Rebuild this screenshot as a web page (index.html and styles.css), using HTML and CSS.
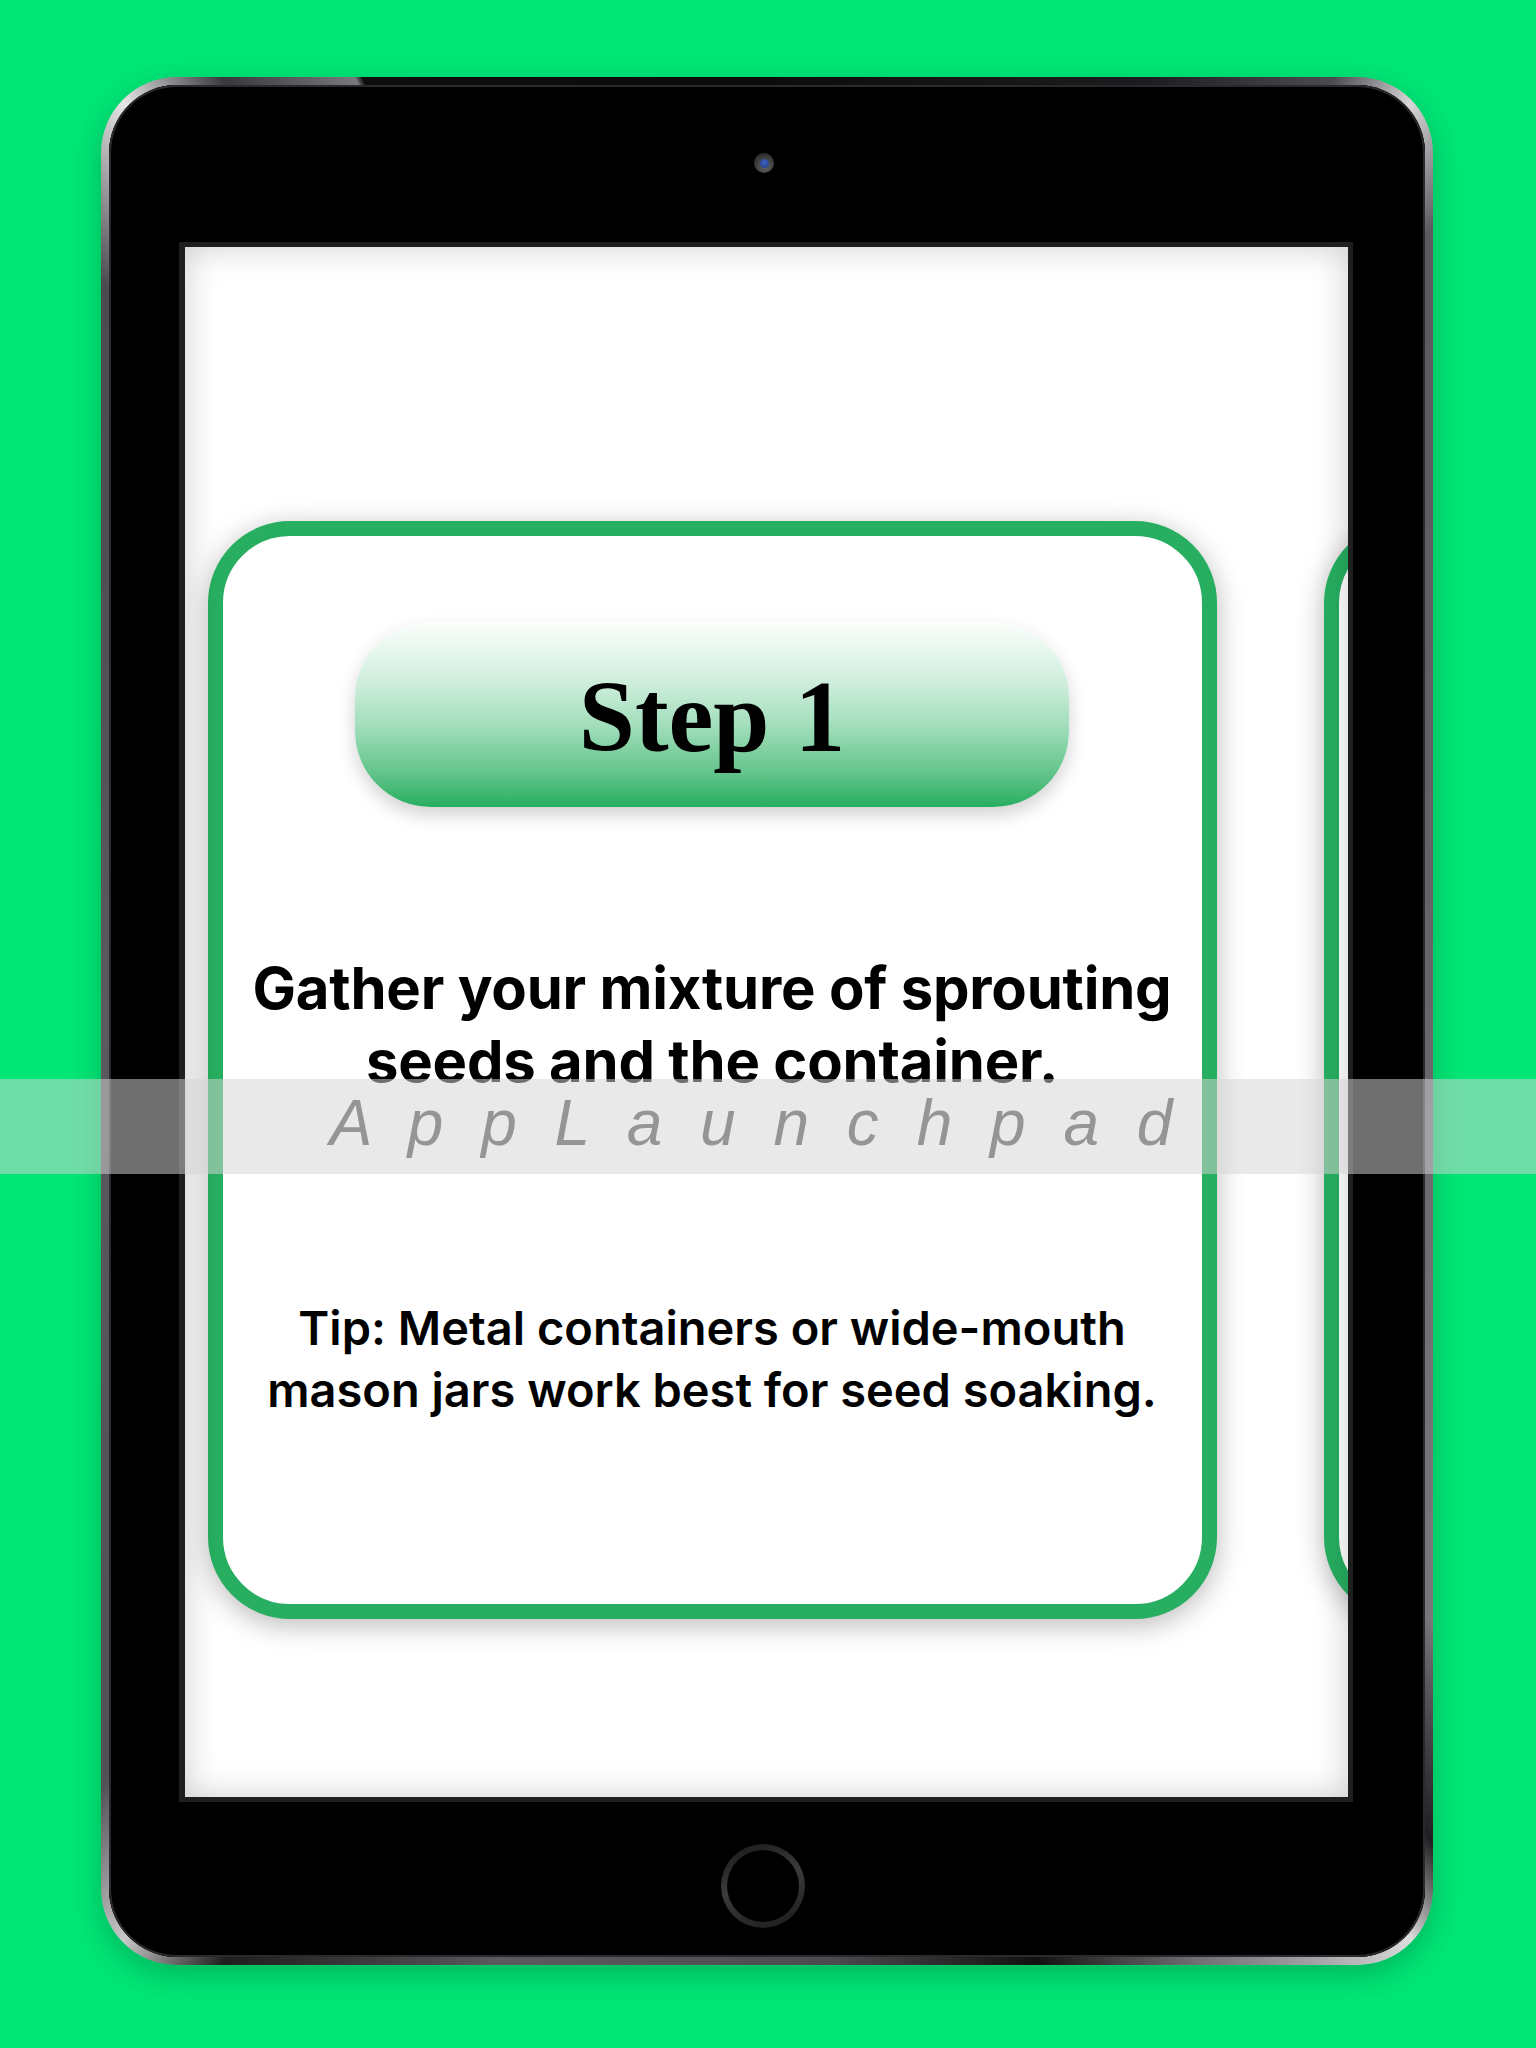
FILE: index.html
```html
<!DOCTYPE html>
<html lang="en">
<head>
<meta charset="utf-8">
<title>Sprouting Steps</title>
<link rel="stylesheet" href="styles.css">
</head>
<body>
<div class="ipad">
  <div class="bezel">
    <div class="camera"><div class="lens"></div></div>
    <div class="screen">
      <div class="track">
        <div class="card">
          <div class="pill">Step 1</div>
          <p class="main">Gather your mixture of sprouting seeds and the container.</p>
          <p class="tip">Tip: Metal containers or wide-mouth mason jars work best for seed soaking.</p>
        </div>
        <div class="card card-next"></div>
      </div>
    </div>
    <div class="home"></div>
  </div>
</div>
<div class="watermark"><span>A p p L a u n c h p a d</span></div>
</body>
</html>
```

FILE: styles.css
```css
html, body {
  margin: 0;
  padding: 0;
}
body {
  background: #00e676;
  width: 1536px;
  height: 2048px;
  position: relative;
  overflow: hidden;
  font-family: "Inter", "Noto Sans", sans-serif;
}
.ipad {
  box-sizing: border-box;
  width: 1332px;
  height: 1888px;
  margin: 77px 0 0 101px;
  padding: 8px;
  border-radius: 76px;
  background: conic-gradient(from 0deg at 50% 50%,
    #0c0c0c 0deg, #1c1c1e 22deg, #4a4a50 31deg, #d8d8d8 35deg, #5a5a60 40deg,
    #66666b 90deg, #77777c 132deg, #202022 141deg, #dcdcdc 145deg, #a0a0a4 150deg,
    #6a6a6e 156deg, #111 164deg, #4c4c50 176deg, #5a5a5f 196deg, #1e1e1e 210deg,
    #c8c8c8 215deg, #505055 221deg, #5a5a5f 270deg, #4a4a4f 318deg, #e6e6e6 325deg,
    #38383c 330deg, #78787e 336.4deg, #0d0d0d 336.8deg, #0c0c0c 360deg);
  box-shadow: 0 10px 30px rgba(0, 0, 0, 0.22);
}
.bezel {
  box-sizing: border-box;
  height: 100%;
  background: #000;
  border-radius: 68px;
  box-shadow: inset 0 0 0 2px #2a2a2e, inset 0 0 0 3px #000;
  display: flex;
  flex-direction: column;
  align-items: center;
  padding-top: 68px;
}
.camera {
  width: 20px;
  height: 20px;
  border-radius: 50%;
  background: radial-gradient(circle at 55% 65%, #6a6a6a 0%, #3a3a3a 55%, #1a1a1a 100%);
  display: flex;
  align-items: center;
  justify-content: center;
  margin-left: -6px;
}
.lens {
  width: 9px;
  height: 9px;
  border-radius: 50%;
  background: radial-gradient(circle at 50% 40%, #3f63c4 0%, #2a4a9c 60%, #1b2f66 100%);
}
.screen {
  position: relative;
  box-sizing: content-box;
  margin-top: 69px;
  width: 1163px;
  height: 1550px;
  border: 5px solid #1f1f1f;
  border-left-width: 6px;
  background: #fff;
  overflow: hidden;
  margin-left: -3px;
}
.screen::after {
  content: "";
  position: absolute;
  inset: 0;
  box-shadow: inset 0 0 34px rgba(0, 0, 0, 0.2);
  pointer-events: none;
}
.track {
  display: flex;
  gap: 107px;
  padding: 274px 0 0 23px;
}
.card {
  flex: 0 0 auto;
  box-sizing: border-box;
  width: 1009px;
  height: 1098px;
  border: 15px solid #27ae60;
  border-radius: 82px;
  background: #fff;
  box-shadow: 0 6px 28px rgba(0, 0, 0, 0.28);
  display: flex;
  flex-direction: column;
  align-items: center;
  padding-top: 86px;
}
.pill {
  width: 714px;
  height: 185px;
  border-radius: 76px;
  background: linear-gradient(to bottom, #fbfefc 0%, #d3efdf 30%, #a4dfbd 55%, #62c38a 82%, #28ae60 100%);
  box-shadow: 0 8px 18px rgba(0, 0, 0, 0.18);
  display: flex;
  align-items: center;
  justify-content: center;
  font-family: "Liberation Serif", "Times New Roman", serif;
  font-weight: bold;
  font-size: 101px;
  color: #000;
  padding-top: 4px;
  box-sizing: border-box;
}
.main {
  margin: 145px 0 0;
  max-width: 950px;
  text-align: center;
  font-size: 58px;
  line-height: 73px;
  font-weight: 700;
  color: #000;
  letter-spacing: -0.2px;
}
.tip {
  margin: 199px 0 0;
  max-width: 905px;
  text-align: center;
  font-size: 47px;
  line-height: 62px;
  font-weight: 600;
  color: #000;
}
.home {
  margin-top: 42px;
  width: 84px;
  height: 84px;
  box-sizing: border-box;
  border-radius: 50%;
  border: 6px solid transparent;
  background:
    linear-gradient(#000, #000) padding-box,
    linear-gradient(160deg, #161616 0%, #3c3c3c 45%, #2c2c2c 70%, #1a1a1a 100%) border-box;
  margin-left: -8px;
}
.watermark {
  position: absolute;
  left: 0;
  top: 1079px;
  width: 100%;
  height: 95px;
  background: rgba(212, 212, 212, 0.52);
  display: flex;
  align-items: center;
  justify-content: center;
}
.watermark span {
  font-family: "Liberation Sans", Arial, sans-serif;
  font-style: italic;
  font-size: 64px;
  letter-spacing: 10px;
  color: #959595;
  margin-left: -24px;
  margin-top: -8px;
}
```
